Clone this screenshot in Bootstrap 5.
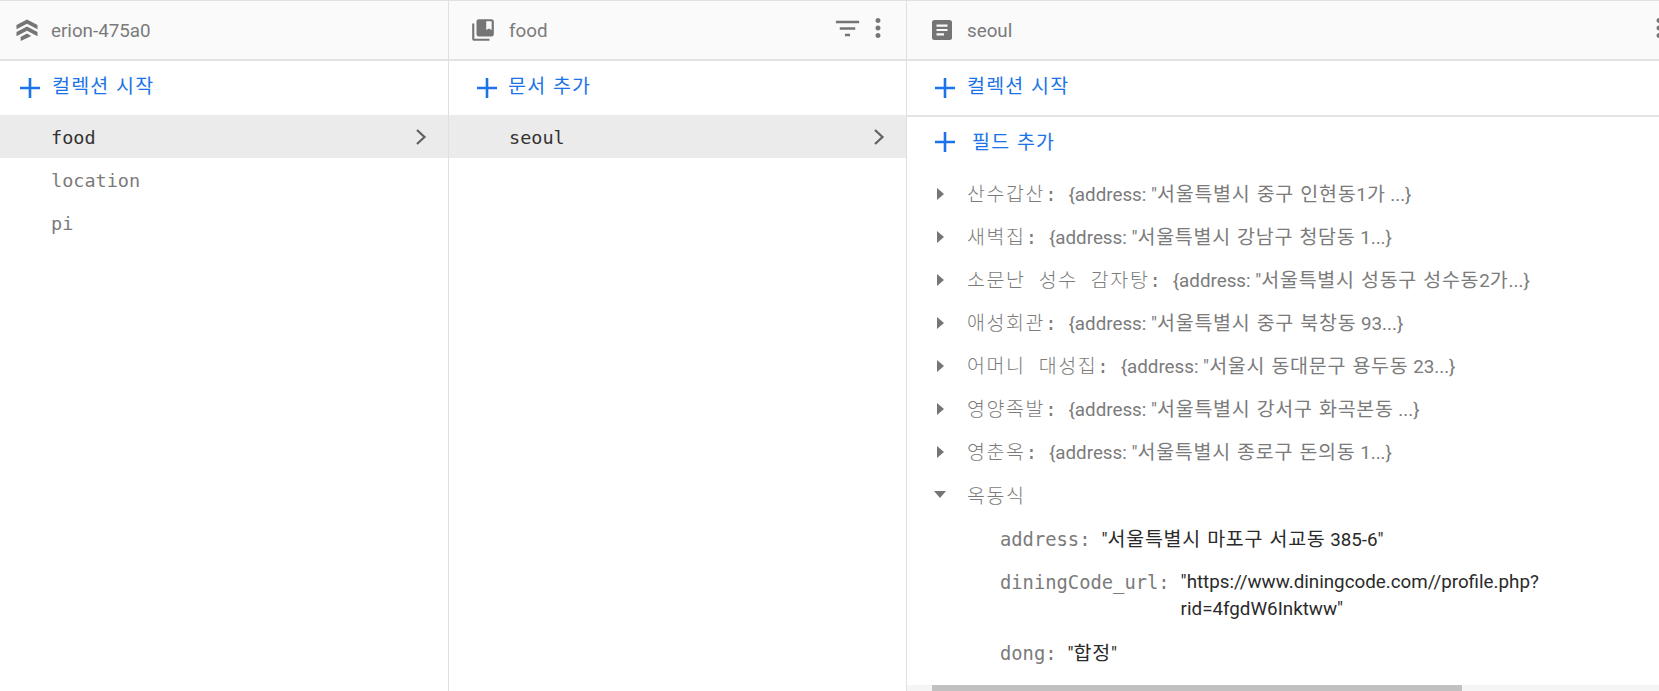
<!DOCTYPE html>
<html lang="ko">
<head>
<meta charset="utf-8">
<title>Firestore</title>
<link href="https://cdn.jsdelivr.net/npm/bootstrap@5.3.0/dist/css/bootstrap.min.css" rel="stylesheet">
<style>
html,body{height:100%;margin:0;overflow:hidden;background:#fff}
body{font-family:Roboto,"Noto Sans CJK KR",sans-serif;font-size:18.8px;color:#7b7b7b}
.shell{height:691px;width:1659px;border-top:1px solid #e0e0e0;overflow:hidden}
.pane{height:100%;min-width:0;border-right:1px solid #e0e0e0}
.pane-a{flex:0 0 449px}
.pane-b{flex:0 0 458px}
.pane-c{flex:1 1 0;border-right:0}
.pane-head{height:60px;flex:none;background:#fafafa;border-bottom:2px solid #e3e3e3;line-height:1}
.head-a{padding-left:15px}
.head-b{padding-left:21px;padding-right:13px}
.head-c{padding-left:23px;margin-right:-14.5px;padding-right:0}
.head-title{margin-left:12px;margin-top:3px;color:#7b7b7b}
.head-b .head-title,.head-c .head-title{margin-left:13px}
.head-c .spacer,.head-b .spacer{flex:1}
.add-row{height:54px;flex:none;color:#1a73e8}
.add-a{padding-left:18px}
.add-b{padding-left:26px}
.add-c{padding-left:26px}
.add-row svg{margin-right:10px}
.add-b svg{margin-right:9px}
.add-row .ko{margin-bottom:7px;letter-spacing:1.2px}
.add-c2{padding-left:26px;height:52px;border-top:2px solid #e3e3e3}
.add-c2 svg{margin-right:15px}
.add-row.add-c2 .ko{margin-bottom:2px}
.ko{font-family:"Noto Sans CJK KR",sans-serif;font-size:19.5px;letter-spacing:.75px}
.doc-row{height:43px;flex:none;font-family:"DejaVu Sans Mono",monospace;font-size:18.5px;color:#7b7b7b;padding-right:20px}
.doc-row.sel{background:#ebebeb;color:#333}
.doc-row span,.doc-label{margin-top:3px}
.row-a{padding-left:51px}
.row-b{padding-left:60px}
.f-list{flex:1 1 0;min-height:0;overflow:hidden;padding-top:5px}
.f-row{height:43px;padding-left:30px;white-space:nowrap}
.f-row svg{flex:none;width:7px;margin-right:23px}
.f-key{font-family:"DejaVu Sans Mono","Noto Sans CJK KR",monospace;font-size:18.8px;color:#7b7b7b}
.k-ko{font-family:"Noto Sans CJK KR",sans-serif;font-size:19.5px;letter-spacing:1.6px;word-spacing:6px;font-weight:300}
.f-val{color:#7b7b7b;margin-left:12px}
.f-row.open svg{width:12px;margin-left:-3px;margin-right:21px}
.f-row.open .f-key{margin-top:3px}
.sub{padding-left:93px;white-space:nowrap;line-height:27px}
.sub-v{color:#2a2a2a;margin-left:11px}
.sub-1{height:44px;margin-top:1px}
.sub-2{height:70px}
.sub-3{height:42px;padding-top:2px}
.bar-track{height:6px;flex:none;background:#f5f5f5;padding-left:25px}
.bar-thumb{height:6px;width:530px;background:#c1c1c1}
</style>
</head>
<body>
<div class="shell d-flex">
  <section class="pane pane-a d-flex flex-column">
    <header class="pane-head head-a d-flex align-items-center">
      <svg width="24" height="24" viewBox="0 0 24 24" fill="#757575"><path d="M12 1.500 22.500 7v4.200L12 5.700 1.500 11.200V7zM12 8.500l10.500 5.500v4.200L12 12.700 1.500 18.200V14zM5.500 19 12 15.600l4.300 2.300L5.800 23z"/></svg>
      <span class="head-title">erion-475a0</span>
    </header>
    <div class="add-row add-a d-flex align-items-center">
      <svg width="24" height="24" viewBox="0 0 24 24" fill="#1a73e8"><path d="M10.700 2h2.600v8.700H22v2.600h-8.700V22h-2.600v-8.700H2v-2.600h8.700z"/></svg>
      <span class="ko">컬렉션 시작</span>
    </div>
    <div class="doc-row sel row-a d-flex align-items-center justify-content-between">
      <span>food</span>
      <svg width="14" height="18" viewBox="0 0 14 18" fill="none" stroke="#616161" stroke-width="2.200"><path d="M3 2l7.500 7L3 16"/></svg>
    </div>
    <div class="doc-row row-a d-flex align-items-center"><span class="doc-label">location</span></div>
    <div class="doc-row row-a d-flex align-items-center"><span class="doc-label">pi</span></div>
  </section>
  <section class="pane pane-b d-flex flex-column">
    <header class="pane-head head-b d-flex align-items-center">
      <svg width="26" height="26" viewBox="0 0 24 24" fill="#757575"><path d="M4 6H2v14c0 1.100.9 2 2 2h14v-2H4V6zm16-4H8c-1.100 0-2 .9-2 2v12c0 1.100.9 2 2 2h12c1.100 0 2-.9 2-2V4c0-1.100-.9-2-2-2zm0 10l-2.500-1.500L15 12V4h5v8z"/></svg>
      <span class="head-title">food</span>
      <span class="spacer"></span>
      <svg class="mb-1" width="31" height="31" viewBox="0 0 24 24" fill="#757575"><path d="M10 18h4v-2h-4v2zM3 6v2h18V6H3zm3 7h12v-2H6v2z"/></svg>
      <svg class="mb-1" width="30" height="30" viewBox="0 0 24 24" fill="#757575"><path d="M12 8c1.100 0 2-.9 2-2s-.9-2-2-2-2 .9-2 2 .9 2 2 2zm0 2c-1.100 0-2 .9-2 2s.9 2 2 2 2-.9 2-2-.9-2-2-2zm0 6c-1.100 0-2 .9-2 2s.9 2 2 2 2-.9 2-2-.9-2-2-2z"/></svg>
    </header>
    <div class="add-row add-b d-flex align-items-center">
      <svg width="24" height="24" viewBox="0 0 24 24" fill="#1a73e8"><path d="M10.700 2h2.600v8.700H22v2.600h-8.700V22h-2.600v-8.700H2v-2.600h8.700z"/></svg>
      <span class="ko">문서 추가</span>
    </div>
    <div class="doc-row sel row-b d-flex align-items-center justify-content-between">
      <span>seoul</span>
      <svg width="14" height="18" viewBox="0 0 14 18" fill="none" stroke="#616161" stroke-width="2.200"><path d="M3 2l7.500 7L3 16"/></svg>
    </div>
  </section>
  <section class="pane pane-c d-flex flex-column">
    <header class="pane-head head-c d-flex align-items-center">
      <svg width="24" height="24" viewBox="0 0 24 24" fill="#757575"><path d="M4.500 2h15A2.500 2.500 0 0 1 22 4.500v15a2.500 2.500 0 0 1-2.500 2.500h-15A2.500 2.500 0 0 1 2 19.500v-15A2.500 2.500 0 0 1 4.500 2zM6.500 6.500v2.200h11V6.500zm0 4.400v2.200h11v-2.200zm0 4.400v2.200h7.500v-2.200z" fill-rule="evenodd"/></svg>
      <span class="head-title">seoul</span>
      <span class="spacer"></span>
      <svg class="mb-1" width="30" height="30" viewBox="0 0 24 24" fill="#757575"><path d="M12 8c1.100 0 2-.9 2-2s-.9-2-2-2-2 .9-2 2 .9 2 2 2zm0 2c-1.100 0-2 .9-2 2s.9 2 2 2 2-.9 2-2-.9-2-2-2zm0 6c-1.100 0-2 .9-2 2s.9 2 2 2 2-.9 2-2-.9-2-2-2z"/></svg>
    </header>
    <div class="add-row add-c d-flex align-items-center">
      <svg width="24" height="24" viewBox="0 0 24 24" fill="#1a73e8"><path d="M10.700 2h2.600v8.700H22v2.600h-8.700V22h-2.600v-8.700H2v-2.600h8.700z"/></svg>
      <span class="ko">컬렉션 시작</span>
    </div>
    <div class="add-row add-c2 d-flex align-items-center">
      <svg width="24" height="24" viewBox="0 0 24 24" fill="#1a73e8"><path d="M10.700 2h2.600v8.700H22v2.600h-8.700V22h-2.600v-8.700H2v-2.600h8.700z"/></svg>
      <span class="ko">필드 추가</span>
    </div>
    <div class="f-list">
      <div class="f-row d-flex align-items-center"><svg height="12" viewBox="0 0 7 12" fill="#757575"><path d="M0 0l7 6-7 6z"/></svg><span class="f-key"><span class="k-ko">산수갑산</span>:</span><span class="f-val">{address: "<span class="ko">서울특별시 중구 인현동</span>1<span class="ko">가</span> ...}</span></div>
      <div class="f-row d-flex align-items-center"><svg height="12" viewBox="0 0 7 12" fill="#757575"><path d="M0 0l7 6-7 6z"/></svg><span class="f-key"><span class="k-ko">새벽집</span>:</span><span class="f-val">{address: "<span class="ko">서울특별시 강남구 청담동</span> 1...}</span></div>
      <div class="f-row d-flex align-items-center"><svg height="12" viewBox="0 0 7 12" fill="#757575"><path d="M0 0l7 6-7 6z"/></svg><span class="f-key"><span class="k-ko">소문난 성수 감자탕</span>:</span><span class="f-val">{address: "<span class="ko">서울특별시 성동구 성수동</span>2<span class="ko">가</span>...}</span></div>
      <div class="f-row d-flex align-items-center"><svg height="12" viewBox="0 0 7 12" fill="#757575"><path d="M0 0l7 6-7 6z"/></svg><span class="f-key"><span class="k-ko">애성회관</span>:</span><span class="f-val">{address: "<span class="ko">서울특별시 중구 북창동</span> 93...}</span></div>
      <div class="f-row d-flex align-items-center"><svg height="12" viewBox="0 0 7 12" fill="#757575"><path d="M0 0l7 6-7 6z"/></svg><span class="f-key"><span class="k-ko">어머니 대성집</span>:</span><span class="f-val">{address: "<span class="ko">서울시 동대문구 용두동</span> 23...}</span></div>
      <div class="f-row d-flex align-items-center"><svg height="12" viewBox="0 0 7 12" fill="#757575"><path d="M0 0l7 6-7 6z"/></svg><span class="f-key"><span class="k-ko">영양족발</span>:</span><span class="f-val">{address: "<span class="ko">서울특별시 강서구 화곡본동</span> ...}</span></div>
      <div class="f-row d-flex align-items-center"><svg height="12" viewBox="0 0 7 12" fill="#757575"><path d="M0 0l7 6-7 6z"/></svg><span class="f-key"><span class="k-ko">영춘옥</span>:</span><span class="f-val">{address: "<span class="ko">서울특별시 종로구 돈의동</span> 1...}</span></div>
      <div class="f-row open d-flex align-items-center"><svg height="7" viewBox="0 0 12 7" fill="#757575"><path d="M0 0h12L6 7z"/></svg><span class="f-key"><span class="k-ko">옥동식</span></span></div>
      <div class="sub sub-1 d-flex align-items-center"><span class="f-key">address:</span><span class="sub-v">"<span class="ko">서울특별시 마포구 서교동</span> 385-6"</span></div>
      <div class="sub sub-2 d-flex align-items-center"><span class="f-key align-self-start mt-2">diningCode_url:</span><span class="sub-v">"https://www.diningcode.com//profile.php?<br>rid=4fgdW6Inktww"</span></div>
      <div class="sub sub-3 d-flex align-items-center"><span class="f-key">dong:</span><span class="sub-v">"<span class="ko">합정</span>"</span></div>
    </div>
    <div class="bar-track"><div class="bar-thumb"></div></div>
  </section>
</div>
<script src="https://cdn.jsdelivr.net/npm/bootstrap@5.3.0/dist/js/bootstrap.bundle.min.js"></script>
</body>
</html>
